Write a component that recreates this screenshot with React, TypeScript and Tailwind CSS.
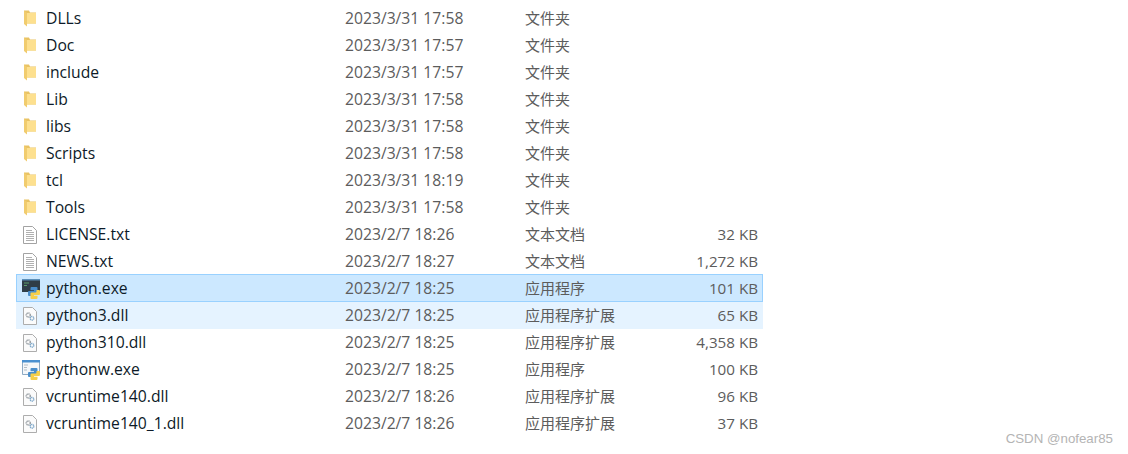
const FONT = "font-['Open_Sans','Noto_Sans_CJK_SC',sans-serif]";

type FileKind = "folder" | "text" | "exe" | "dll" | "exew";

interface FileRow {
  name: string;
  date: string;
  type: string;
  size?: string;
  kind: FileKind;
  state?: "selected" | "hover";
}

const files: FileRow[] = [
  { name: "DLLs", date: "2023/3/31 17:58", type: "文件夹", kind: "folder" },
  { name: "Doc", date: "2023/3/31 17:57", type: "文件夹", kind: "folder" },
  { name: "include", date: "2023/3/31 17:57", type: "文件夹", kind: "folder" },
  { name: "Lib", date: "2023/3/31 17:58", type: "文件夹", kind: "folder" },
  { name: "libs", date: "2023/3/31 17:58", type: "文件夹", kind: "folder" },
  { name: "Scripts", date: "2023/3/31 17:58", type: "文件夹", kind: "folder" },
  { name: "tcl", date: "2023/3/31 18:19", type: "文件夹", kind: "folder" },
  { name: "Tools", date: "2023/3/31 17:58", type: "文件夹", kind: "folder" },
  { name: "LICENSE.txt", date: "2023/2/7 18:26", type: "文本文档", size: "32 KB", kind: "text" },
  { name: "NEWS.txt", date: "2023/2/7 18:27", type: "文本文档", size: "1,272 KB", kind: "text" },
  { name: "python.exe", date: "2023/2/7 18:25", type: "应用程序", size: "101 KB", kind: "exe", state: "selected" },
  { name: "python3.dll", date: "2023/2/7 18:25", type: "应用程序扩展", size: "65 KB", kind: "dll", state: "hover" },
  { name: "python310.dll", date: "2023/2/7 18:25", type: "应用程序扩展", size: "4,358 KB", kind: "dll" },
  { name: "pythonw.exe", date: "2023/2/7 18:25", type: "应用程序", size: "100 KB", kind: "exew" },
  { name: "vcruntime140.dll", date: "2023/2/7 18:26", type: "应用程序扩展", size: "96 KB", kind: "dll" },
  { name: "vcruntime140_1.dll", date: "2023/2/7 18:26", type: "应用程序扩展", size: "37 KB", kind: "dll" },
];

const SNAKE =
  "M11.500 8h5a1 1 0 0 1 1 1v4.500a1 1 0 0 1-1 1h-4a1 1 0 0 0-1 1V17H9a1 1 0 0 1-1-1v-3a1 1 0 0 1 1-1h5v-.8h-3.500V9a1 1 0 0 1 1-1z";

// two interlocked snakes, fills the lower right part of the 20x20 icon box
function PythonMark() {
  return (
    <>
      <path d={SNAKE} fill="#4a8ecb" />
      <path d={SNAKE} fill="#f7cf4a" transform="rotate(180 14 14)" />
    </>
  );
}

function FileIcon({ kind }: { kind: FileKind }) {
  if (kind === "folder") {
    return (
      <svg width="12" height="17" viewBox="0 0 12 17">
        <path d="M0 .5h5l1 2h6v11H0z" fill="#e9c364" />
        <path d="M3 3h9v10.500H3z" fill="#fde08f" />
        <path d="M0 .8 3 3v13.500L0 14z" fill="#f1cc6e" />
      </svg>
    );
  }
  if (kind === "text") {
    return (
      <svg width="14" height="18" viewBox="0 0 14 18">
        <path d="M.5.500h9l4 4v13H.5z" fill="#fff" stroke="#a3a3a3" />
        <path d="M3 4.500h6M3 6.500h8M3 8.500h8M3 10.500h8M3 12.500h8M3 14.500h8" stroke="#b0b0b0" />
      </svg>
    );
  }
  if (kind === "dll") {
    return (
      <svg width="14" height="18" viewBox="0 0 14 18">
        <path d="M.5.500h9l4 4v13H.5z" fill="#fbfbfb" stroke="#adadad" />
        <circle cx="5.300" cy="8" r="2" fill="none" stroke="#9aa0a5" strokeWidth="1.500" strokeDasharray="1.200 .5" />
        <circle cx="9" cy="11.300" r="1.800" fill="none" stroke="#7ba6c9" strokeWidth="1.400" strokeDasharray="1.200 .5" />
      </svg>
    );
  }
  if (kind === "exe") {
    return (
      <svg width="20" height="20" viewBox="0 0 20 20">
        <path d="M2 0h18v13H2z" fill="#2f3d47" />
        <path d="M2 0h18v1.500H2z" fill="#5c8fb8" />
        <path d="M4 4h5M4 6.500h3" stroke="#5a9c6a" />
        <PythonMark />
      </svg>
    );
  }
  return (
    <svg width="20" height="20" viewBox="0 0 20 20">
      <path d="M2.500.500h17v14h-17z" fill="#f4f7fa" stroke="#8eaac4" />
      <path d="M2 0h18v2.500H2z" fill="#4a90d0" />
      <path d="M4 5h4M4 7.500h3M4 10h3" stroke="#b4bcc4" />
      <PythonMark />
    </svg>
  );
}

function Row({ file }: { file: FileRow }) {
  let rowClass = "h-[27px]";
  if (file.state === "selected") rowClass = "-mt-px h-[28px] pt-px bg-[#cce8ff] outline outline-1 -outline-offset-1 outline-[#99d1ff]";
  if (file.state === "hover") rowClass = "h-[27px] bg-[#e5f3ff]";

  return (
    <div className={`flex w-[747px] items-center text-[15.7px] ${rowClass}`}>
      <div className="flex w-[30px] shrink-0 items-center justify-center pr-[2px]">
        <FileIcon kind={file.kind} />
      </div>
      <span className="w-[299px] shrink-0 text-[#0d1a28]">{file.name}</span>
      <span className="w-[180px] shrink-0 text-[#5c5c5c]">{file.date}</span>
      <span className="w-[120px] shrink-0 text-[15px] text-[#5c5c5c]">{file.type}</span>
      <span className="w-[113px] shrink-0 text-right text-[15.2px] text-[#5c5c5c]">{file.size}</span>
    </div>
  );
}

export default function App() {
  return (
    <div className={`relative h-[454px] w-[1128px] overflow-hidden bg-white pl-4 pt-[5px] ${FONT}`}>
      {files.map((file) => (
        <Row key={file.name} file={file} />
      ))}
      <span className="absolute bottom-[5px] right-[15px] font-['Liberation_Sans',sans-serif] text-[13.3px] text-[#b4b4b4]">
        CSDN @nofear85
      </span>
    </div>
  );
}
